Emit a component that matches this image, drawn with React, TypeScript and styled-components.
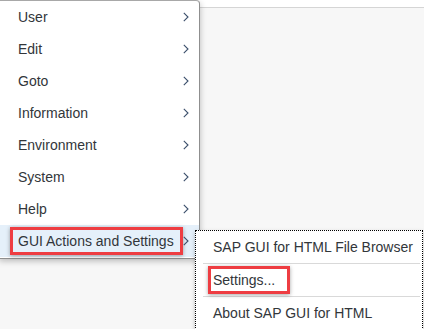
import React from 'react';
import styled, { createGlobalStyle } from 'styled-components';

const GlobalStyle = createGlobalStyle`
  html, body {
    margin: 0;
    padding: 0;
    background: #f7f7f7;
    font-family: "Liberation Sans", Arial, sans-serif;
  }
`;

const Page = styled.div`
  position: relative;
  width: 424px;
  height: 329px;
  overflow: hidden;
  background: #f7f7f7;
`;

const TopBar = styled.div`
  height: 7px;
  background: #ffffff;
  border-bottom: 1px solid #d5d5d5;
`;

// context menu floats over the page
const Menu = styled.ul`
  position: absolute;
  left: -1px;
  top: 0;
  width: 199px;
  margin: 0;
  padding: 0 0 1px;
  list-style: none;
  background: #ffffff;
  border: 1px solid #8f8f8f;
  border-top-color: #a8a8a8;
  border-radius: 0 4px 4px 0;
  box-shadow: 0 2px 6px rgba(0, 0, 0, 0.25);
`;

const Item = styled.li<{ $active?: boolean }>`
  display: flex;
  align-items: center;
  justify-content: space-between;
  height: 32px;
  padding: 0 10px 0 18px;
  font-size: 14px;
  color: #32363a;
  white-space: nowrap;
  background: ${p => (p.$active ? '#e5f0fa' : 'transparent')};

  svg {
    flex-shrink: 0;
  }
`;

// red annotation frame drawn round a label
const Marked = styled.span<{ $inset: number; $trail: number }>`
  display: flex;
  align-items: center;
  flex-shrink: 0;
  box-sizing: border-box;
  height: 28px;
  margin-left: -${p => p.$inset + 3}px;
  padding: 0 ${p => p.$trail}px 0 ${p => p.$inset}px;
  white-space: nowrap;
  border: 3px solid #ee3d42;
  box-shadow: 0 1px 4px rgba(0, 0, 0, 0.35);
`;

const SubMenu = styled.ul`
  position: absolute;
  left: 195px;
  top: 230px;
  width: 228px;
  margin: 0;
  padding: 0;
  list-style: none;
  box-sizing: border-box;
  background: #ffffff;
  border: 1px dotted #000000;
  box-shadow: 0 2px 4px rgba(0, 0, 0, 0.25);
`;

const SubItem = styled.li<{ $divider?: boolean }>`
  display: flex;
  align-items: center;
  height: 32px;
  margin: 0 2px 0 7px;
  padding-left: 10px;
  font-size: 14px;
  color: #32363a;
  white-space: nowrap;
  border-top: ${p => (p.$divider ? '1px solid #d9d9d9' : 'none')};
`;

const Chevron = () => (
  <svg width="6" height="10" viewBox="0 0 6 10">
    <polyline points="0.8,0.8 5,5 0.8,9.2" fill="none" stroke="#3b4f6b" strokeWidth="1.1" />
  </svg>
);

const items = ['User', 'Edit', 'Goto', 'Information', 'Environment', 'System', 'Help'];

const App: React.FC = () => (
  <Page>
    <GlobalStyle />
    <TopBar />
    <Menu>
      {items.map(label => (
        <Item key={label}>
          {label}
          <Chevron />
        </Item>
      ))}
      <Item $active>
        <Marked $inset={5} $trail={6}>GUI Actions and Settings</Marked>
        <Chevron />
      </Item>
    </Menu>
    <SubMenu>
      <SubItem>SAP GUI for HTML File Browser</SubItem>
      <SubItem $divider>
        <Marked $inset={2} $trail={12}>Settings...</Marked>
      </SubItem>
      <SubItem $divider>About SAP GUI for HTML</SubItem>
    </SubMenu>
  </Page>
);

export default App;
